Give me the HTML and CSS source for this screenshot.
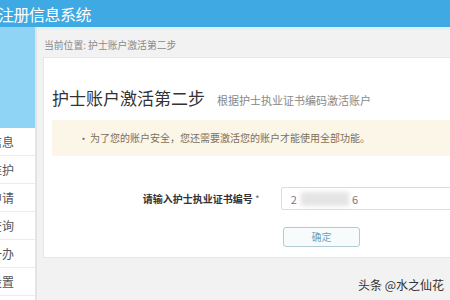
FILE: index.html
```html
<!DOCTYPE html>
<html lang="zh">
<head>
<meta charset="utf-8">
<link rel="stylesheet" href="styles.css">
</head>
<body>
<header class="topbar"><span class="brand">注册信息系统</span></header>
<div class="layout">
  <aside class="sidebar">
    <div class="side-head"></div>
    <ul class="menu">
      <li><span>个人信息</span></li>
      <li><span>账户维护</span></li>
      <li><span>注册申请</span></li>
      <li><span>信息查询</span></li>
      <li><span>一办</span></li>
      <li><span>系统设置</span></li>
    </ul>
  </aside>
  <main class="main">
    <div class="crumb">当前位置: 护士账户激活第二步</div>
    <section class="card">
      <h1 class="title">护士账户激活第二步<small class="sub">根据护士执业证书编码激活账户</small></h1>
      <div class="alert"><span class="dot">•</span>为了您的账户安全，您还需要激活您的账户才能使用全部功能。</div>
      <div class="form-row">
        <label class="label">请输入护士执业证书编号 <em class="req">*</em></label>
        <div class="input"><span>2</span><span class="blur"></span><span>6</span></div>
      </div>
      <div class="btn-row"><button class="btn">确定</button></div>
    </section>
    <div class="mark">头条 @水之仙花</div>
  </main>
</div>
</body>
</html>
```
FILE: styles.css
```css
* { box-sizing: border-box; }
html, body { margin: 0; padding: 0; }
body {
  width: 450px; height: 300px; overflow: hidden;
  font-family: "Noto Sans CJK SC", "Noto Sans", sans-serif;
  background: #f2f2f2; color: #333;
}
.topbar {
  height: 27px; background: #3ea9e2;
  display: flex; align-items: center;
}
.brand { color: #fff; font-size: 16px; line-height: 20px; margin-left: -2px; letter-spacing: -0.5px; }
.layout { display: flex; height: 273px; }
.sidebar {
  width: 37px; flex: none; background: #fff;
  border-right: 2px solid #e4e4e4; overflow: hidden;
}
.side-head { height: 101px; background: #8fd4f4; }
.menu { list-style: none; margin: 0; padding: 0; }
.menu li {
  height: 28px; border-bottom: 1px solid #ececec;
  display: flex; justify-content: flex-end; align-items: center;
  padding-right: 21px; white-space: nowrap;
  font-size: 12px; line-height: 16px; color: #555;
}
.main {
  flex: 1; position: relative; overflow: hidden;
  border-top: 3px solid #dcf2fb; padding-left: 6px;
}
.crumb {
  height: 27px; display: flex; align-items: center;
  padding-left: 1px; padding-top: 2px;
  font-size: 9.8px; line-height: 12px; color: #8a8a8a;
}
.card {
  height: 201px; margin-right: -10px;
  background: #fff; border: 1px solid #e6e6e6;
  padding: 28px 0 0 8px;
}
.title {
  margin: 0; font-weight: 400; font-size: 17px; line-height: 24px; color: #333;
  display: flex; align-items: baseline;
}
.sub { font-size: 11px; color: #888; margin-left: 12px; }
.alert {
  margin-top: 8px; height: 36px; background: #fcf6e8;
  display: flex; align-items: center; padding-left: 26px;
  font-size: 10px; line-height: 14px; color: #7d6e58;
}
.dot { width: 12px; font-size: 11px; }
.form-row { display: flex; align-items: center; margin-top: 31px; }
.label {
  width: 210px; text-align: right; font-size: 10px; line-height: 14px;
  font-weight: 700; color: #333; margin-right: 21px;
}
.req { font-style: normal; font-weight: 400; color: #777; }
.input {
  width: 180px; height: 23px; border: 1px solid #dcdcdc; border-radius: 2px;
  display: flex; align-items: center; padding-left: 9px;
  font-size: 11px; color: #777;
}
.blur {
  width: 48px; height: 14px; background: #e4e4e4; margin: 0 3px 0 4px;
  filter: blur(2px);
}
.btn-row { margin-top: 12px; padding-left: 231px; }
.btn {
  width: 77px; height: 20px; padding: 0; font-family: inherit;
  border: 1px solid #b0cbd6; border-radius: 3px; background: #f7fbfc;
  font-size: 10px; line-height: 14px; color: #6aa6c2;
}
.mark {
  position: absolute; left: 321px; top: 247px;
  font-size: 12px; line-height: 16px; color: #333;
}
```
